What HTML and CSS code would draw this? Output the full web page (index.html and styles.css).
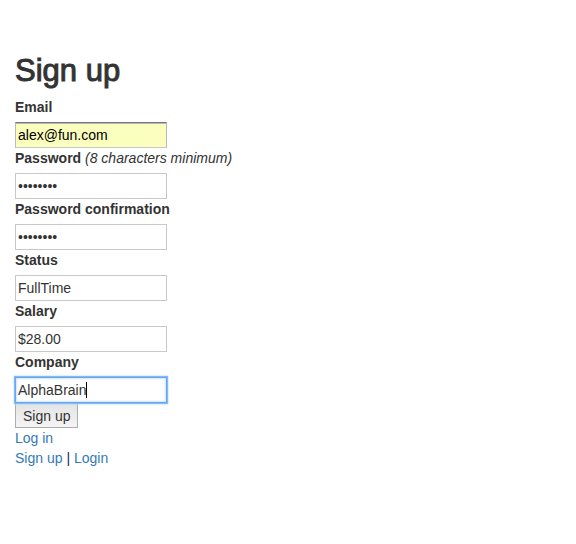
FILE: index.html
```html
<!DOCTYPE html>
<html lang="en">
<head>
<meta charset="utf-8">
<title>Sign up</title>
<link rel="stylesheet" href="styles.css">
</head>
<body>
<main class="container">
  <h2 class="title">Sign up</h2>
  <form class="form">
    <div class="field">
      <label for="email">Email</label>
      <input class="autofilled" type="email" id="email" value="alex@fun.com">
    </div>
    <div class="field">
      <div class="label-row"><label for="password">Password</label> <em>(8 characters minimum)</em></div>
      <input type="password" id="password" value="abcdefgh">
    </div>
    <div class="field">
      <label for="confirmation">Password confirmation</label>
      <input type="password" id="confirmation" value="abcdefgh">
    </div>
    <div class="field">
      <label for="status">Status</label>
      <input type="text" id="status" value="FullTime">
    </div>
    <div class="field">
      <label for="salary">Salary</label>
      <input type="text" id="salary" value="$28.00">
    </div>
    <div class="field">
      <label for="company">Company</label>
      <div class="active-box">
        <input class="active" type="text" id="company" value="AlphaBrain">
        <span class="caret"></span>
      </div>
    </div>
    <button class="submit" type="button">Sign up</button>
  </form>
  <nav class="links">
    <div><a href="#login">Log in</a></div>
    <div><a href="#signup">Sign up</a> <span class="divider">|</span> <a href="#login">Login</a></div>
  </nav>
</main>
</body>
</html>
```
FILE: styles.css
```css
* {
  box-sizing: border-box;
}

body {
  margin: 0;
  background: #fff;
  color: #333;
  font: 14px/20px "Liberation Sans", Arial, sans-serif;
}

.container {
  padding: 54px 15px 0;
}

.title {
  margin: 0 0 10px;
  font-size: 31px;
  font-weight: 400;
  line-height: 33px;
  -webkit-text-stroke: 1px #333;
}

.form {
  display: flex;
  flex-direction: column;
  align-items: flex-start;
}

.field {
  display: flex;
  flex-direction: column;
  align-items: flex-start;
  gap: 5px;
}

label {
  font-weight: 700;
}

input {
  display: block;
  width: 152px;
  height: 26px;
  margin: 0;
  padding: 1px 2px;
  border: 1px solid #c8c8c8;
  border-radius: 0;
  background: #fff;
  color: #333;
  font: inherit;
  outline: none;
}

.autofilled {
  border-color: #77757f #b9b8c0 #c8c8c8;
  background: #faffbd;
  box-shadow: inset 0 1px 0 #b9b8b0;
  color: #000;
}

.active-box {
  position: relative;
}

.active {
  border-color: #67a7ee;
  box-shadow: 0 0 0 1px #84baf5, 0 0 2px 1px #a9cff8, inset 0 0 2px 1px #cfe4fb;
}

.caret {
  position: absolute;
  top: 5px;
  left: 71px;
  width: 1px;
  height: 16px;
  background: #000;
}

.submit {
  height: 25px;
  margin: 0;
  padding: 0 7px;
  border: 1px solid #adadad;
  border-radius: 0;
  background: linear-gradient(#e4e4e4, #f4f4f4);
  color: #333;
  font: inherit;
}

.links a {
  color: #337ab7;
  text-decoration: none;
}

.divider {
  color: #23236e;
}
```
